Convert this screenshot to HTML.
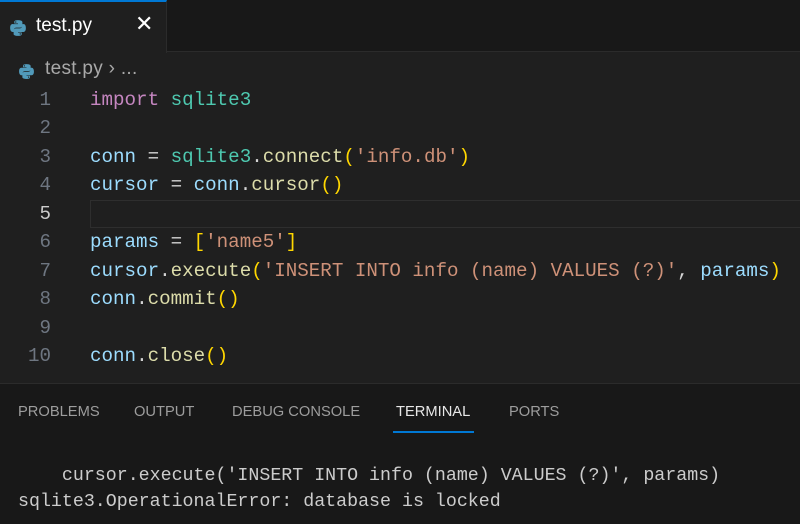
<!DOCTYPE html>
<html><head><meta charset="utf-8"><style>
body{margin:0;width:800px;height:523px;background:#1f1f1f;overflow:hidden;position:relative;font-family:"Segoe UI","Liberation Sans",sans-serif}
.tabbar{position:absolute;left:0;top:0;width:800px;height:52px;background:#181818;border-bottom:1px solid #2b2b2b;box-sizing:border-box}
.tab{position:absolute;left:0;top:0;width:167px;height:53px;background:#1f1f1f;border-top:2px solid #0078d4;box-sizing:border-box;border-right:1px solid #2b2b2b}
.tab .name{position:absolute;left:36px;top:13px;font-size:19px;color:#fff}
.tab .x{position:absolute;left:135px;top:9px;font-size:22px;color:#fff}
.py{position:absolute}
.crumb{position:absolute;left:45px;top:58px;font-size:19px;color:#a9a9a9;letter-spacing:0.3px}
.code{position:absolute;left:0;top:86px;font-family:"Liberation Mono",monospace;font-size:19.2px;line-height:28.44px;white-space:pre}
.ln{position:absolute;left:0;width:51px;text-align:right;color:#6e7681}
.tx{position:absolute;left:90px;color:#9cdcfe}
.cur{position:absolute;left:90px;top:200px;width:712px;height:28px;border:1px solid #2e2e2e;box-sizing:border-box}
.k{color:#c586c0}.m{color:#4ec9b0}.f{color:#dcdcaa}.s{color:#ce9178}.b{color:#ffd700}.w{color:#d4d4d4}
.panel{position:absolute;left:0;top:383px;width:800px;height:140px;background:#181818;border-top:1px solid #2b2b2b}
.pt{position:absolute;top:20px;font-size:14.7px;color:#9d9d9d}
.term{position:absolute;left:18px;top:79px;font-family:"Liberation Mono",monospace;font-size:18.3px;line-height:26px;color:#cccccc;white-space:pre}
</style></head><body>
<div class="tabbar"></div>
<div class="tab">
<svg class="py" style="left:9px;top:17px" width="18" height="18" viewBox="0 0 16 16"><path d="M7.9 1C4.5 1 4.7 2.5 4.7 2.5V4h3.3v.5H3.4S1 4.2 1 7.9s2.1 3.6 2.1 3.6h1.3V9.8s-.1-2.1 2.1-2.1h3.4s2 0 2-2V2.8S12.2 1 7.9 1zM6 2.1a.6.6 0 110 1.2.6.6 0 010-1.2z" fill="#519aba"/><path d="M8.1 15c3.4 0 3.2-1.5 3.2-1.5V12H8v-.5h4.6s2.4.3 2.4-3.4-2.1-3.6-2.1-3.6h-1.3v1.7s.1 2.1-2.1 2.1H6.1s-2 0-2 2v3s-.3 1.7 4 1.7zm1.9-1.1a.6.6 0 110-1.2.6.6 0 010 1.2z" fill="#519aba"/></svg>
<span class="name">test.py</span><span class="x">✕</span></div>
<svg class="py" style="left:18px;top:63px" width="17" height="17" viewBox="0 0 16 16"><path d="M7.9 1C4.5 1 4.7 2.5 4.7 2.5V4h3.3v.5H3.4S1 4.2 1 7.9s2.1 3.6 2.1 3.6h1.3V9.8s-.1-2.1 2.1-2.1h3.4s2 0 2-2V2.8S12.2 1 7.9 1zM6 2.1a.6.6 0 110 1.2.6.6 0 010-1.2z" fill="#519aba"/><path d="M8.1 15c3.4 0 3.2-1.5 3.2-1.5V12H8v-.5h4.6s2.4.3 2.4-3.4-2.1-3.6-2.1-3.6h-1.3v1.7s.1 2.1-2.1 2.1H6.1s-2 0-2 2v3s-.3 1.7 4 1.7zm1.9-1.1a.6.6 0 110-1.2.6.6 0 010 1.2z" fill="#519aba"/></svg>
<div class="crumb">test.py › ...</div>
<div class="cur"></div>
<div class="code">
<div class="ln" style="top:0">1</div><div class="ln" style="top:28.44px">2</div><div class="ln" style="top:56.88px">3</div><div class="ln" style="top:85.32px">4</div><div class="ln" style="top:113.76px;color:#ccc">5</div><div class="ln" style="top:142.2px">6</div><div class="ln" style="top:170.64px">7</div><div class="ln" style="top:199.08px">8</div><div class="ln" style="top:227.52px">9</div><div class="ln" style="top:255.96px">10</div>
<div class="tx" style="top:0"><span class="k">import</span> <span class="m">sqlite3</span></div>
<div class="tx" style="top:56.88px">conn <span class="w">=</span> <span class="m">sqlite3</span><span class="w">.</span><span class="f">connect</span><span class="b">(</span><span class="s">'info.db'</span><span class="b">)</span></div>
<div class="tx" style="top:85.32px">cursor <span class="w">=</span> conn<span class="w">.</span><span class="f">cursor</span><span class="b">()</span></div>
<div class="tx" style="top:142.2px">params <span class="w">=</span> <span class="b">[</span><span class="s">'name5'</span><span class="b">]</span></div>
<div class="tx" style="top:170.64px">cursor<span class="w">.</span><span class="f">execute</span><span class="b">(</span><span class="s">'INSERT INTO info (name) VALUES (?)'</span><span class="w">,</span> params<span class="b">)</span></div>
<div class="tx" style="top:199.08px">conn<span class="w">.</span><span class="f">commit</span><span class="b">()</span></div>
<div class="tx" style="top:255.96px">conn<span class="w">.</span><span class="f">close</span><span class="b">()</span></div>
</div>
<div class="panel">
<span class="pt" style="left:18px">PROBLEMS</span>
<span class="pt" style="left:134px">OUTPUT</span>
<span class="pt" style="left:232px">DEBUG CONSOLE</span>
<span class="pt" style="left:396px;color:#e7e7e7">TERMINAL</span>
<span class="pt" style="left:509px">PORTS</span>
<div style="position:absolute;left:393px;top:47px;width:81px;height:1.5px;background:#0078d4"></div>
<div class="term">    cursor.execute('INSERT INTO info (name) VALUES (?)', params)
sqlite3.OperationalError: database is locked</div>
</div>
</body></html>
